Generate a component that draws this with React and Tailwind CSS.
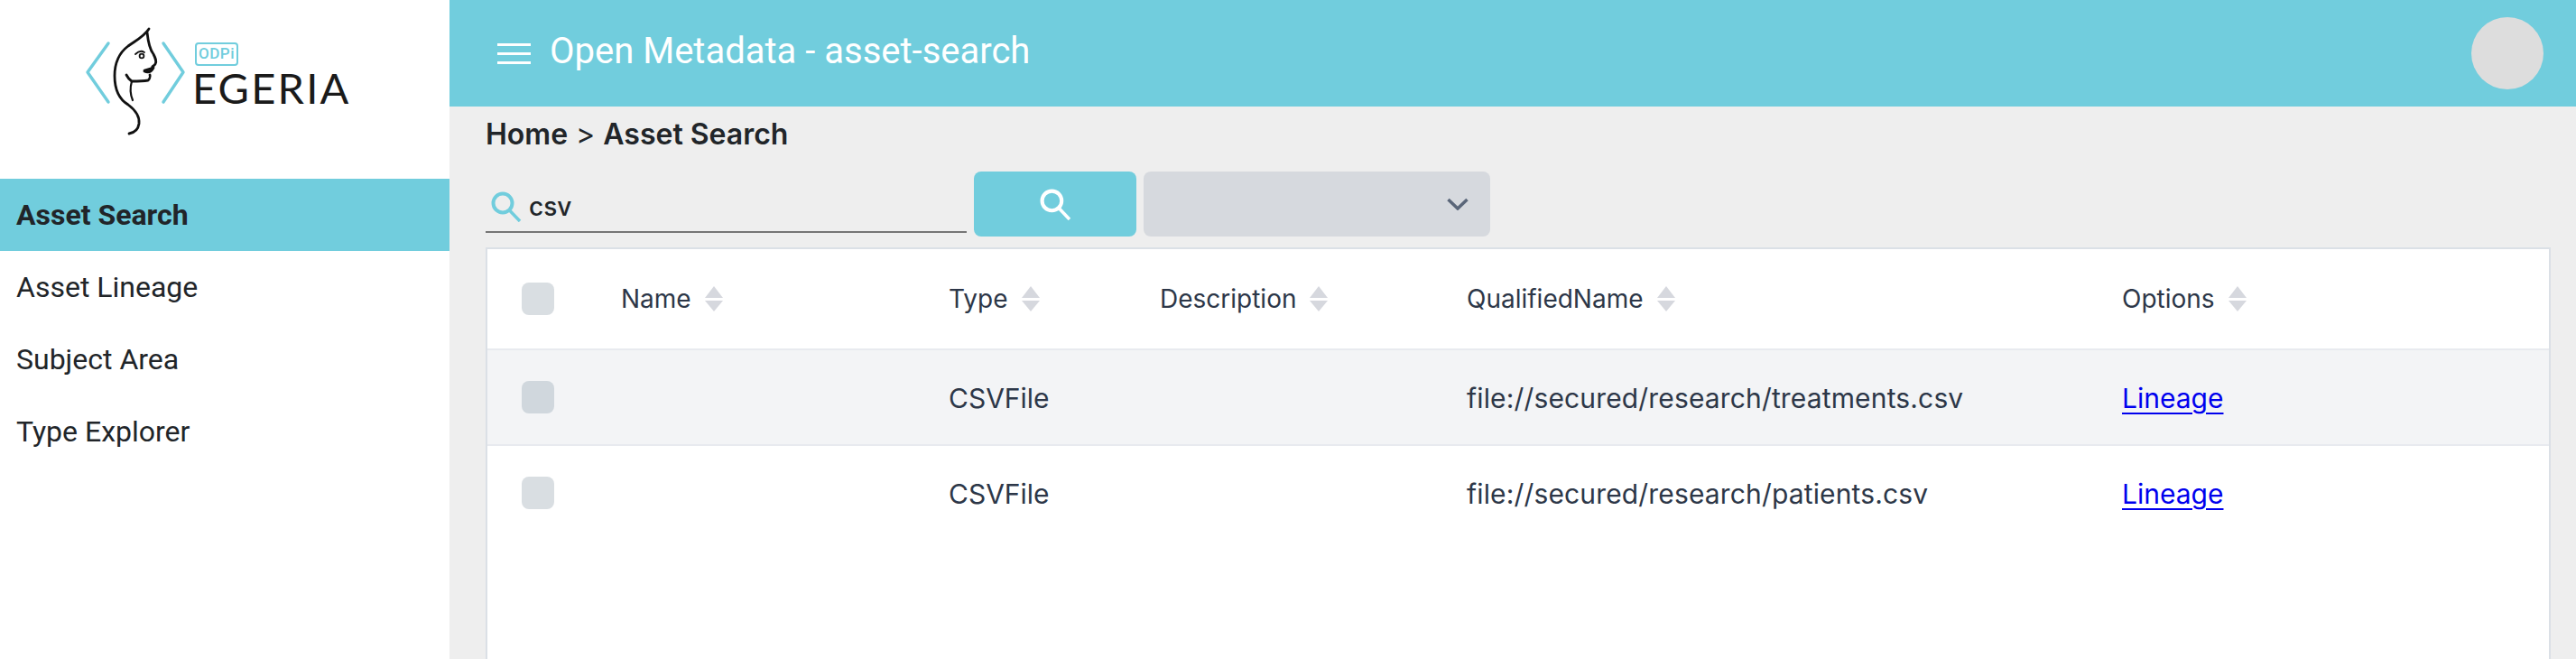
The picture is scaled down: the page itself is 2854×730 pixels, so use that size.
import React from 'react';

const SearchIcon = ({ className }) => (
    <svg viewBox="0 0 34 34" fill="none" stroke="currentColor" className={className}>
        <circle cx="13" cy="13" r="10.5" strokeWidth="4" />
        <path d="M20.5 21 L32 33" strokeWidth="3.5" />
    </svg>
);

const SortIcon = () => (
    <svg viewBox="0 0 20 28" className="w-5 h-7 shrink-0 fill-[#d6d8de]">
        <path d="M10 0 L20 13 H0 Z" />
        <path d="M0 16 H20 L10 28 Z" />
    </svg>
);

const Logo = () => (
    <div className="h-[198px] flex items-start pl-[93px] pt-[29px]">
        <svg viewBox="93 29 120 124" className="w-[120px] h-[124px]" fill="none" strokeLinecap="round" strokeLinejoin="round">
            <path d="M120 48 L97 80 L120 113" stroke="#71cddd" strokeWidth="3.4" />
            <path d="M181 48 L203 80 L181 113" stroke="#71cddd" strokeWidth="3.4" />
            <g stroke="#111" strokeWidth="2.8">
                <path d="M165 32 C160 40 152 44 142 51 C130 60 127 72 127 84 C127 100 132 110 142 116 C150 122 155 128 154 137 C153 144 149 147 143 148" />
                <path d="M163 36 C164 45 166 55 170 60 C172 64 174 68 172 71 C170 74 168 73 169 75" />
                <path d="M160 78 L170 75 C168 79 165 81 160 79" />
                <path d="M166 83 C167 85 165 88 164 89 C158 90 150 90 146 90 C143 88 141 85 140 83" />
                <path d="M146 90 C144 97 144 104 147 111" strokeWidth="2.2" />
                <circle cx="157" cy="62" r="2.4" strokeWidth="1.8" />
                <path d="M150 60 C153 57 157 56 160 58" strokeWidth="1.8" />
            </g>
        </svg>
        <div className="ml-[3px] mt-[18px] flex flex-col items-start">
            <div className="w-[48px] h-[26px] border-2 border-[#71cddd] rounded-[4px] flex items-center justify-center font-[Roboto,sans-serif] font-medium text-[17px] tracking-[0.5px] text-[#71cddd]">
                ODPi
            </div>
            <div className="font-[Lato,sans-serif] text-[47px] leading-[34px] tracking-[2.2px] -ml-[3px] mt-[7px] text-[#1a1a1a] h-[34px]">EGERIA</div>
        </div>
    </div>
);

const navItems = ['Asset Search', 'Asset Lineage', 'Subject Area', 'Type Explorer'];

const Sidebar = () => (
    <aside className="w-[498px] shrink-0 bg-white font-[Roboto,sans-serif] text-[32px] text-[#212529]">
        <Logo />
        <nav>
            {navItems.map((item, i) => (
                <div
                    key={item}
                    className={i === 0 ? 'h-20 pl-[18px] flex items-center bg-[#71cddd] font-bold' : 'h-20 pl-[18px] flex items-center'}
                >
                    {item}
                </div>
            ))}
        </nav>
    </aside>
);

const columns = ['Name', 'Type', 'Description', 'QualifiedName', 'Options'];

const rows = [
    { type: 'CSVFile', path: 'file://secured/research/treatments.csv' },
    { type: 'CSVFile', path: 'file://secured/research/patients.csv' },
];

const gridCols = 'grid grid-cols-[115px_396px_234px_340px_726px_1fr]';

const Table = () => (
    <div className="flex-1 ml-10 mr-7 bg-white border-2 border-b-0 border-[#dbe0e6] font-[Inter,sans-serif] text-[#2d3748]">
        <div className={`${gridCols} h-[112px] border-b-2 border-[#e8eaef] text-[28px]`}>
            <div className="pl-[38px] flex items-center">
                <span className="w-9 h-9 rounded-lg bg-[#d9dee2]" />
            </div>
            {columns.map((col, i) => (
                <div key={col} className={i === 0 ? 'pl-[33px] flex items-center gap-[15px]' : 'flex items-center gap-[15px]'}>
                    {col}
                    <SortIcon />
                </div>
            ))}
        </div>
        {rows.map((row, i) => (
            <div key={row.path} className={i === 0 ? `${gridCols} h-[106px] border-b-2 border-[#e8eaef] bg-[#f3f4f6] text-[30px]` : `${gridCols} h-[104px] text-[30px]`}>
                <div className="pl-[38px] flex items-center">
                    <span className={i === 0 ? 'w-9 h-9 rounded-lg bg-[#d0d7dd]' : 'w-9 h-9 rounded-lg bg-[#d9dee2]'} />
                </div>
                <div />
                <div className="flex items-center pt-[2px]">{row.type}</div>
                <div />
                <div className="flex items-center pt-[2px] tracking-[0.15px]">{row.path}</div>
                <div className="flex items-center pt-[2px]">
                    <a href="#lineage" className="text-[#0000ee] underline decoration-2 underline-offset-[5px]">Lineage</a>
                </div>
            </div>
        ))}
    </div>
);

const App = () => {
    return (
        <div className="flex w-full h-[730px] overflow-hidden bg-[#eeeeee]">
            <Sidebar />
            <main className="flex-1 flex flex-col min-w-0">
                <header className="h-[118px] shrink-0 bg-[#71cddd] flex items-center pl-[53px] pr-9 text-white font-[Roboto,sans-serif]">
                    <div className="w-[37px] flex flex-col gap-[7px] mt-px">
                        <span className="h-[3px] bg-white" />
                        <span className="h-[3px] bg-white" />
                        <span className="h-[3px] bg-white" />
                    </div>
                    <h1 className="ml-[21px] -mt-[5px] text-[40px] leading-none">Open Metadata - asset-search</h1>
                    <div className="ml-auto w-20 h-20 rounded-full bg-[#dddddd]" />
                </header>

                <div className="pl-10 pt-[7px] h-[72px] shrink-0 text-[32px] text-[#212529] font-[Inter,sans-serif]">
                    <span className="font-semibold">Home</span> &gt; <span className="font-semibold">Asset Search</span>
                </div>

                <div className="flex ml-10 h-[72px] shrink-0 gap-2 mb-3">
                    <label className="w-[533px] h-[68px] border-b-2 border-[#757575] flex items-center pl-[6px] pt-[12px] gap-2 text-[#71cddd]">
                        <SearchIcon className="w-[34px] h-[34px] shrink-0" />
                        <input
                            readOnly
                            value="csv"
                            className="w-full outline-none bg-transparent font-[Inter,sans-serif] font-medium text-[28px] text-[#212529]"
                        />
                    </label>
                    <button className="w-[180px] rounded-lg bg-[#71cddd] text-white flex items-center justify-center">
                        <SearchIcon className="w-[35px] h-[35px]" />
                    </button>
                    <div className="w-[384px] rounded-lg bg-[#d6d9de] flex items-center justify-end pr-6">
                        <svg viewBox="0 0 24 14" className="w-6 h-[14px]" fill="none" stroke="#5a6679" strokeWidth="3.5">
                            <path d="M1.5 2 L12 12 L22.5 2" />
                        </svg>
                    </div>
                </div>

                <Table />
            </main>
        </div>
    );
};

export default App;
